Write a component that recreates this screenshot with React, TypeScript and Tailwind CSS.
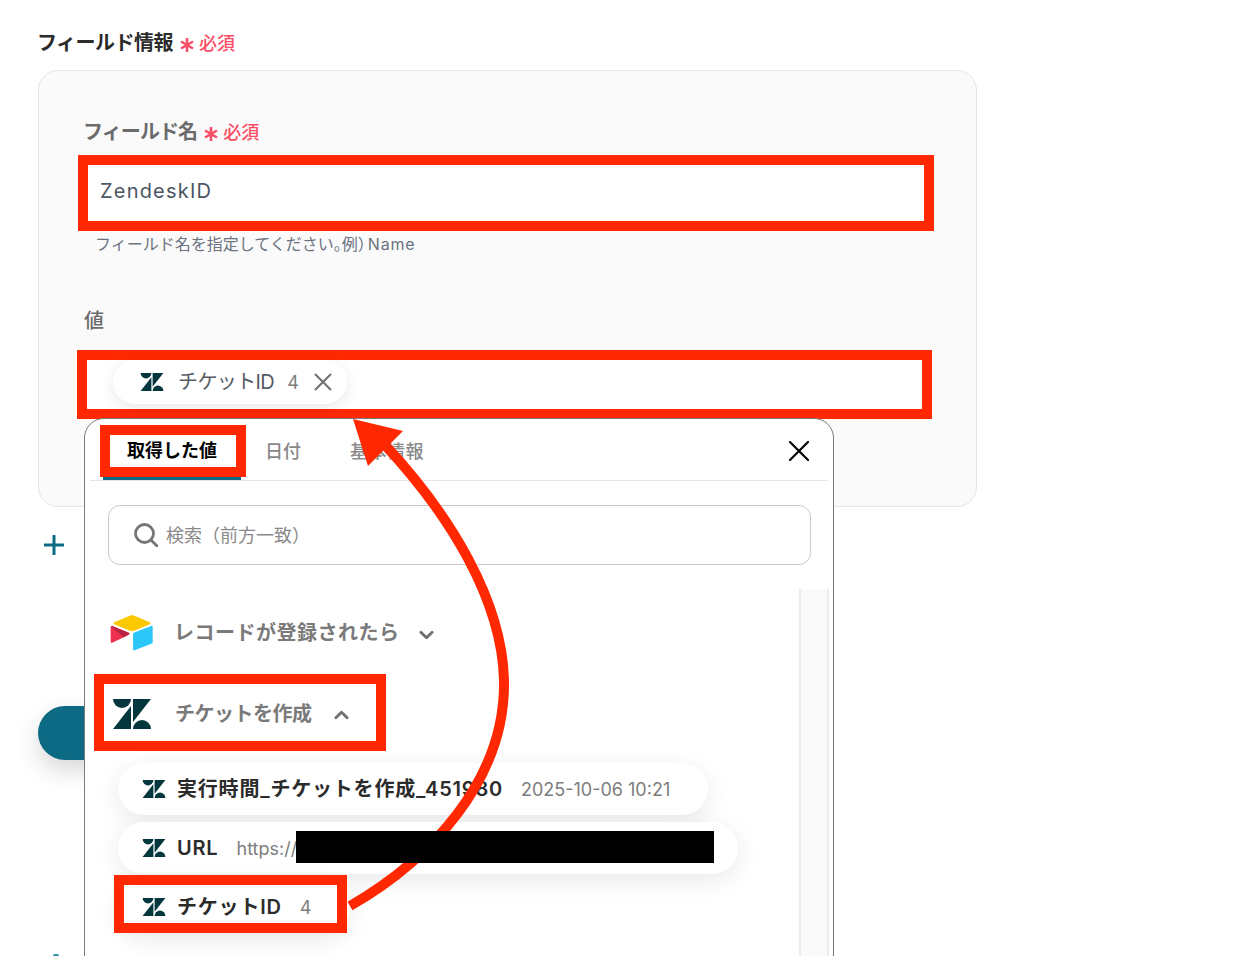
function ZendeskMark({ className }: { className: string }) {
  return (
    <svg viewBox="0 0 38 30" className={className} fill="#03363d">
      <path d="M18 7V30H0Z" />
      <path d="M18 0A9 9 0 0 1 0 0Z" />
      <path d="M20 23V0H38Z" />
      <path d="M20 30A9 9 0 0 1 38 30Z" />
    </svg>
  );
}

function AirtableMark() {
  return (
    <svg viewBox="0 0 200 170" className="h-[37px] w-[44px] shrink-0">
      <path fill="#fcc800" d="M90 3L18 33c-4 2-4 8 0 10l72 29c7 3 14 3 20 0l72-29c4-2 4-8 0-10L111 3c-7-3-14-3-21 0" />
      <path fill="#2dc6f8" d="M105 86v72c0 3 3 6 7 4l80-31c2-1 3-3 3-5V54c0-3-4-6-7-4l-80 31c-2 1-3 3-3 5" />
      <path fill="#f0304f" d="M86 90L62 102l-2 1-51 24c-3 2-7-1-7-4V55c0-1 1-2 1-3 1-1 1-1 2-1 1-1 3-1 4 0l76 30c4 2 4 7 1 9" />
      <path fill="#b92344" d="M86 90L62 102 3 52c1-1 1-1 2-1 1-1 3-1 4 0l76 30c4 2 4 7 1 9" />
    </svg>
  );
}

function Required() {
  return (
    <span className="flex items-center gap-[5px] text-[18px] font-medium text-[#fa4d66]">
      <svg viewBox="0 0 14 14" className="mt-[3px] h-[14px] w-[14px]" stroke="#fa4d66" strokeWidth="2.6">
        <path d="M7 0V14M1 3.5L13 10.5M13 3.5L1 10.5" />
      </svg>
      必須
    </span>
  );
}

function Chevron({ up }: { up?: boolean }) {
  return (
    <svg viewBox="0 0 16 10" className="h-[10px] w-[15px]" fill="none" stroke="#6f6f6f" strokeWidth="3" strokeLinecap="round" strokeLinejoin="round">
      <path d={up ? "M2 8L8 2L14 8" : "M2 2L8 8L14 2"} />
    </svg>
  );
}

function ValueRow({ label, value, className }: { label: string; value?: string; className: string }) {
  return (
    <div className={`flex h-[52px] items-center rounded-full bg-white pl-[24px] shadow-[0_6px_24px_rgba(0,0,0,0.09)] ${className}`}>
      <ZendeskMark className="h-[18px] w-[24px] shrink-0" />
      <span className="ml-[11px] whitespace-nowrap text-[20px] font-semibold tracking-[0.8px] text-[#2b2b2b]">{label}</span>
      {value && <span className="ml-[18px] whitespace-nowrap text-[18px] text-[#7d7d7d]">{value}</span>}
    </div>
  );
}

export default function App() {
  return (
    <div className="relative h-[956px] overflow-hidden bg-white pl-[38px] pt-[29px] font-[Inter,'Noto_Sans_CJK_JP',sans-serif]">
      <div className="flex h-[28px] items-center gap-[7px]">
        <span className="-ml-[1px] text-[20px] font-semibold tracking-[-0.5px] text-[#2b2b2b]">フィールド情報</span>
        <Required />
      </div>

      <div className="mt-[13px] h-[437px] w-[939px] rounded-[20px] border border-[#e5e5e5] bg-[#fafafa] pl-[45px] pt-[47px]">
        <div className="flex h-[28px] items-center gap-[7px]">
          <span className="-ml-[1px] text-[20px] font-semibold tracking-[-0.9px] text-[#6b6b6b]">フィールド名</span>
          <Required />
        </div>
        <div className="-ml-[6px] mt-[9px] flex h-[76px] w-[856px] items-center border-[10px] border-[#ff2800] bg-white pb-[4px] pl-[12px] text-[20px] tracking-[1.2px] text-[#4b5563]">
          ZendeskID
        </div>
        <p className="ml-[11px] mt-[1px] text-[16px] leading-[24px] text-[#6b7280]">
          フィールド名を指定してください<span className="[font-feature-settings:'halt']">。</span>例
          <span className="[font-feature-settings:'halt']">）</span>
          <span className="ml-[2px] tracking-[0.8px]">Name</span>
        </p>
        <p className="mt-[51px] text-[20px] font-medium leading-[28px] text-[#6b6b6b]">値</p>
        <div className="-ml-[7px] mt-[15px] h-[69px] w-[855px] border-[10px] border-[#ff2800] bg-white pl-[26px]">
          <div className="flex h-[44px] w-[234px] items-center rounded-full bg-white pl-[27px] shadow-[0_4px_16px_rgba(0,0,0,0.09)]">
            <ZendeskMark className="h-[18px] w-[24px] shrink-0" />
            <span className="ml-[14px] text-[20px] tracking-[-0.6px] text-[#555b63]">チケットID</span>
            <span className="ml-[13px] text-[18px] text-[#7d7d7d]">4</span>
            <svg viewBox="0 0 18 18" className="ml-[15px] h-[18px] w-[18px]" stroke="#6f6f6f" strokeWidth="2">
              <path d="M1 1L17 17M17 1L1 17" />
            </svg>
          </div>
        </div>
      </div>

      <svg viewBox="0 0 20 20" className="ml-[6px] mt-[28px] h-[20px] w-[20px]" stroke="#0c6a85" strokeWidth="3" strokeLinecap="round">
        <path d="M10 1V19M1 10H19" />
      </svg>
      <div className="mt-[151px] h-[54px] w-[300px] rounded-full bg-[#0c6a85] shadow-[0_10px_24px_rgba(0,0,0,0.16)]" />
      <div className="ml-[15px] mt-[194px] h-[2px] w-[6px] rounded-t-full bg-[#3a8aa5]" />

      {/* dropdown over the form */}
      <div className="absolute left-[84px] top-[418px] h-[600px] w-[750px] rounded-t-[20px] border border-[#7a7a7a] bg-white">
        <div className="mx-[5px] flex h-[62px] items-end border-b border-[#e5e5e5]">
          <div className="ml-[13px] flex h-[61px] w-[138px] items-center justify-center border-b-[3px] border-[#0c6a85] pt-[5px] text-[18px] font-bold text-black">
            取得した値
          </div>
          <div className="ml-[24px] flex h-[61px] items-center pt-[3px] text-[18px] font-medium text-[#8a8a8a]">日付</div>
          <div className="ml-[49px] flex h-[61px] items-center pt-[3px] text-[18px] font-medium tracking-[0.5px] text-[#8a8a8a]">基本情報</div>
          <svg viewBox="0 0 20 20" className="mb-[19px] ml-auto mr-[19px] h-[20px] w-[20px]" stroke="#000" strokeWidth="2.2" strokeLinecap="round">
            <path d="M1 1L19 19M19 1L1 19" />
          </svg>
        </div>

        <div className="ml-[23px] mt-[24px] flex h-[60px] w-[703px] items-center gap-[8px] rounded-xl border border-[#c8c8c8] pl-[25px]">
          <svg viewBox="0 0 24 24" className="h-[24px] w-[24px]" fill="none" stroke="#757575" strokeWidth="2.8" strokeLinecap="round">
            <circle cx="10.5" cy="10.5" r="9" />
            <path d="M17 17L23 23" />
          </svg>
          <span className="pt-[1px] text-[18px] text-[#8a8a8a]">検索（前方一致）</span>
        </div>

        <div className="mt-[24px] flex">
          <div className="w-[714px] pt-[26px]">
            <div className="ml-[25px] flex h-[37px] items-center">
              <AirtableMark />
              <span className="mb-[2px] ml-[20px] text-[20px] font-semibold tracking-[0.5px] text-[#7a7a7a]">レコードが登録されたら</span>
              <span className="ml-[19px] mt-[2px]"><Chevron /></span>
            </div>
            <div className="ml-[28px] mt-[47px] flex h-[30px] items-center">
              <ZendeskMark className="h-[30px] w-[38px] shrink-0" />
              <span className="ml-[24px] text-[20px] font-semibold tracking-[-0.5px] text-[#7a7a7a]">チケットを作成</span>
              <span className="ml-[22px] mt-[2px]"><Chevron up /></span>
            </div>
            <ValueRow className="ml-[33px] mt-[34px] w-[590px]" label="実行時間_チケットを作成_451980" value="2025-10-06 10:21" />
            <ValueRow className="ml-[33px] mt-[7px] w-[620px]" label="URL" value="https://" />
            <ValueRow className="ml-[33px] mt-[7px] w-[232px]" label="チケットID" value="4" />
          </div>
          <div className="mr-[4px] h-[400px] w-[30px] border-x-2 border-[#ececec] bg-[#fafafa]" />
        </div>
      </div>

      {/* annotation layer */}
      <svg viewBox="0 0 1253 956" className="pointer-events-none absolute inset-0 h-[956px] w-[1253px]" fill="none">
        <path d="M350 906C430 860 506 780 504 680C502 600 450 515 385 445" stroke="#ff2800" strokeWidth="10" />
        <path d="M353 419L403 431L368 466Z" fill="#ff2800" />
      </svg>
      <div className="absolute left-[100px] top-[425px] h-[52px] w-[146px] border-[10px] border-[#ff2800]" />
      <div className="absolute left-[94px] top-[674px] h-[77px] w-[292px] border-[10px] border-[#ff2800]" />
      <div className="absolute left-[114px] top-[875px] h-[58px] w-[233px] border-[10px] border-[#ff2800]" />
      <div className="absolute left-[296px] top-[831px] h-[32px] w-[418px] bg-black" />
    </div>
  );
}
